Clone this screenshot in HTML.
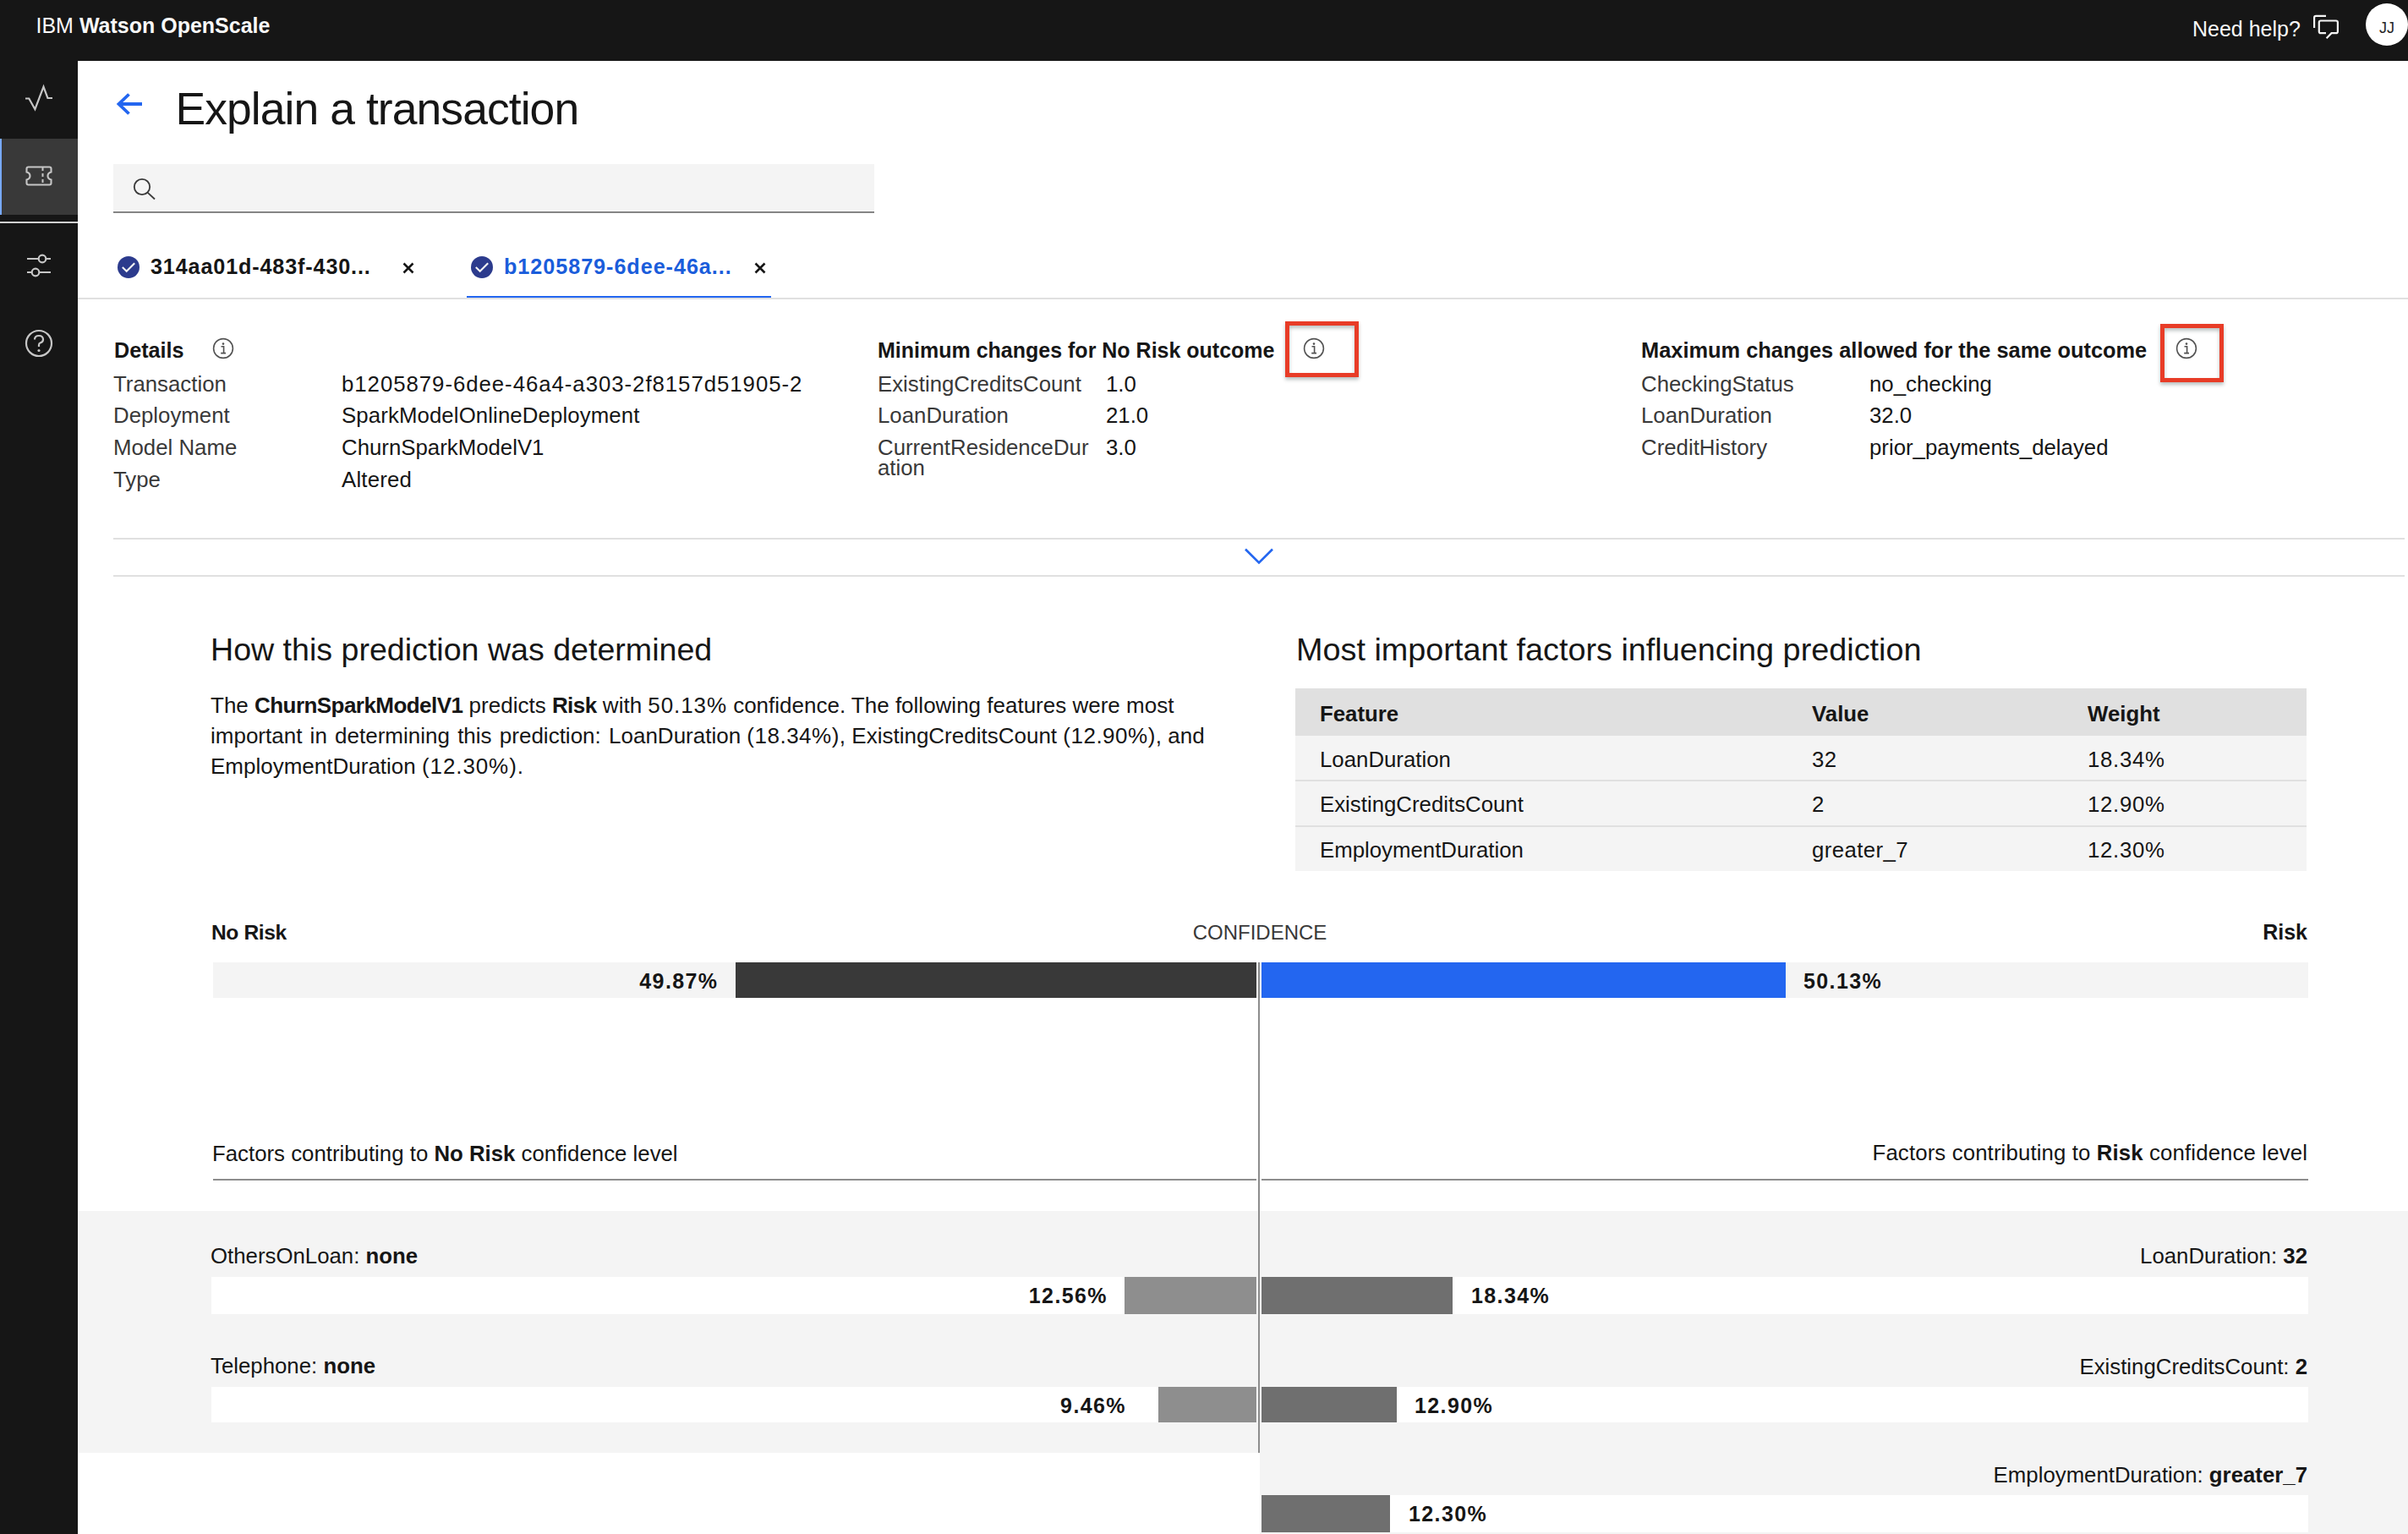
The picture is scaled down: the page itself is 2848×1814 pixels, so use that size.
<!DOCTYPE html>
<html><head><meta charset="utf-8"><title>Explain a transaction</title>
<style>
html,body{margin:0;padding:0;}
body{width:2848px;height:1814px;position:relative;overflow:hidden;background:#ffffff;font-family:"Liberation Sans",sans-serif;}
.t{position:absolute;white-space:nowrap;}
.t b{font-weight:700;}
.r{position:absolute;}
</style></head><body>
<div class="r" style="left:0px;top:0px;width:2848px;height:72px;background:#161616;"></div>
<div class="t" style="left:42.5px;top:17.5px;font-size:25px;line-height:25px;color:#f8f8f8;font-weight:400;">IBM <b>Watson OpenScale</b></div>
<div class="t" style="left:2593.0px;top:21.9px;font-size:25px;line-height:25px;color:#f8f8f8;font-weight:400;">Need help?</div>
<svg class="r" style="left:2734px;top:16px" width="34" height="32" viewBox="0 0 34 32">
<path d="M3.1 17 V5 Q3.1 2.9 5.1 2.9 H17" fill="none" stroke="#f4f4f4" stroke-width="2.2"/>
<path d="M17 23.2 H10.8 Q8.8 23.2 8.8 21.2 V10.5 Q8.8 8.5 10.8 8.5 H28.9 Q30.9 8.5 30.9 10.5 V21.2 Q30.9 23.2 28.9 23.2 H23.5 L17.6 29.2" fill="none" stroke="#f4f4f4" stroke-width="2.2"/>
</svg>
<div class="r" style="left:2798px;top:4px;width:50px;height:50px;border-radius:25px;background:#ffffff;"></div>
<div class="t" style="left:2814.0px;top:24.1px;font-size:18px;line-height:18px;color:#262626;font-weight:400;">JJ</div>
<div class="r" style="left:0px;top:72px;width:92px;height:1742px;background:#161616;"></div>
<div class="r" style="left:0px;top:164px;width:92px;height:90px;background:#393939;"></div>
<div class="r" style="left:0px;top:164px;width:2px;height:90px;background:#78a9ff;"></div>
<div class="r" style="left:0px;top:262px;width:92px;height:2px;background:#d0d0d0;"></div>
<svg class="r" style="left:28px;top:98px" width="36" height="36" viewBox="0 0 36 36">
<path d="M2 18.5 H6.3 L13.4 31.2 L23.5 4.6 L28.4 18 H34" fill="none" stroke="#c6c6c6" stroke-width="2.2" stroke-linejoin="miter" stroke-miterlimit="3"/>
</svg>
<svg class="r" style="left:28px;top:194px" width="36" height="28" viewBox="0 0 36 28">
<path d="M5.5 3.5 H30.5 Q32.5 3.5 32.5 5.5 V9.5 Q28.5 10.5 28.5 14 Q28.5 17.5 32.5 18.5 V22.5 Q32.5 24.5 30.5 24.5 H5.5 Q3.5 24.5 3.5 22.5 V18.5 Q7.5 17.5 7.5 14 Q7.5 10.5 3.5 9.5 V5.5 Q3.5 3.5 5.5 3.5 Z" fill="none" stroke="#c6c6c6" stroke-width="2.1"/>
<path d="M22.5 4 V25" stroke="#c6c6c6" stroke-width="2" stroke-dasharray="4 3"/>
</svg>
<svg class="r" style="left:30px;top:294px" width="32" height="36" viewBox="0 0 32 36">
<path d="M2 12 H15.5 M24.5 12 H30" stroke="#c6c6c6" stroke-width="2.2"/>
<circle cx="20" cy="12" r="4.3" fill="none" stroke="#c6c6c6" stroke-width="2.2"/>
<path d="M2 28 H7.5 M16.5 28 H30" stroke="#c6c6c6" stroke-width="2.2"/>
<circle cx="12" cy="28" r="4.3" fill="none" stroke="#c6c6c6" stroke-width="2.2"/>
</svg>
<svg class="r" style="left:28px;top:388px" width="36" height="36" viewBox="0 0 36 36">
<circle cx="18" cy="18" r="15" fill="none" stroke="#c6c6c6" stroke-width="2.2"/>
<path d="M13 13.5 Q13 9 18 9 Q23 9 23 13.5 Q23 16.5 19.5 17.5 Q18 18 18 20 V22" fill="none" stroke="#c6c6c6" stroke-width="2.2"/>
<circle cx="18" cy="26.5" r="1.6" fill="#c6c6c6"/>
</svg>
<svg class="r" style="left:136px;top:108px" width="34" height="30" viewBox="0 0 34 30">
<path d="M4 15 H32 M16.5 3.5 L4.5 15 L16.5 26.5" fill="none" stroke="#2366f0" stroke-width="3.8"/>
</svg>
<div class="t" style="left:207.5px;top:102.0px;font-size:53.5px;line-height:53.5px;color:#161616;font-weight:400;letter-spacing:-0.95px;">Explain a transaction</div>
<div class="r" style="left:134px;top:194px;width:900px;height:56px;background:#f4f4f4;"></div>
<div class="r" style="left:134px;top:250px;width:900px;height:2px;background:#858585;"></div>
<svg class="r" style="left:155px;top:208px" width="32" height="32" viewBox="0 0 32 32">
<circle cx="13" cy="13" r="9.2" fill="none" stroke="#393939" stroke-width="1.8"/>
<path d="M19.8 19.8 L28 27.5" stroke="#393939" stroke-width="1.8"/>
</svg>
<svg class="r" style="left:138px;top:302px" width="28" height="28" viewBox="0 0 28 28">
<circle cx="14" cy="14" r="13" fill="#2c3b8d"/>
<path d="M6.8 14 L11.7 18.8 L21.2 9.3" fill="none" stroke="#f4f4f4" stroke-width="2.1"/>
</svg>
<div class="t" style="left:178.0px;top:302.9px;font-size:25.2px;line-height:25.2px;color:#161616;font-weight:700;letter-spacing:0.85px;">314aa01d-483f-430...</div>
<svg class="r" style="left:476px;top:310px" width="14" height="14" viewBox="0 0 14 14">
<path d="M1.5 1.5 L12.5 12.5 M12.5 1.5 L1.5 12.5" stroke="#161616" stroke-width="2.6"/>
</svg>
<svg class="r" style="left:556px;top:302px" width="28" height="28" viewBox="0 0 28 28">
<circle cx="14" cy="14" r="13" fill="#2c3b8d"/>
<path d="M6.8 14 L11.7 18.8 L21.2 9.3" fill="none" stroke="#f4f4f4" stroke-width="2.1"/>
</svg>
<div class="t" style="left:596.0px;top:302.5px;font-size:25.2px;line-height:25.2px;color:#1a5ddb;font-weight:700;letter-spacing:0.95px;">b1205879-6dee-46a...</div>
<svg class="r" style="left:892px;top:310px" width="14" height="14" viewBox="0 0 14 14">
<path d="M1.5 1.5 L12.5 12.5 M12.5 1.5 L1.5 12.5" stroke="#161616" stroke-width="2.6"/>
</svg>
<div class="r" style="left:92px;top:352px;width:2756px;height:2px;background:#e0e0e0;"></div>
<div class="r" style="left:552px;top:350px;width:360px;height:2px;background:#2366f0;"></div>
<div class="t" style="left:135.0px;top:402.0px;font-size:25.2px;line-height:25.2px;color:#161616;font-weight:700;">Details</div>
<svg class="r" style="left:251px;top:399px" width="26" height="26" viewBox="0 0 26 26">
<circle cx="13" cy="13" r="11.4" fill="none" stroke="#525252" stroke-width="1.6"/>
<circle cx="13" cy="7.6" r="1.3" fill="#525252"/>
<path d="M10.5 10.8 H13.6 V18.6 M10.2 18.6 H16" fill="none" stroke="#525252" stroke-width="1.6"/>
</svg>
<div class="t" style="left:134.0px;top:441.7px;font-size:25.8px;line-height:25.8px;color:#393939;font-weight:400;">Transaction</div>
<div class="t" style="left:404.0px;top:441.7px;font-size:25.8px;line-height:25.8px;color:#161616;font-weight:400;letter-spacing:0.95px;">b1205879-6dee-46a4-a303-2f8157d51905-2</div>
<div class="t" style="left:134.0px;top:479.2px;font-size:25.8px;line-height:25.8px;color:#393939;font-weight:400;">Deployment</div>
<div class="t" style="left:404.0px;top:479.2px;font-size:25.8px;line-height:25.8px;color:#161616;font-weight:400;letter-spacing:0.1px;">SparkModelOnlineDeployment</div>
<div class="t" style="left:134.0px;top:517.0px;font-size:25.8px;line-height:25.8px;color:#393939;font-weight:400;">Model Name</div>
<div class="t" style="left:404.0px;top:517.0px;font-size:25.8px;line-height:25.8px;color:#161616;font-weight:400;letter-spacing:0px;">ChurnSparkModelV1</div>
<div class="t" style="left:134.0px;top:555.1px;font-size:25.8px;line-height:25.8px;color:#393939;font-weight:400;">Type</div>
<div class="t" style="left:404.0px;top:555.1px;font-size:25.8px;line-height:25.8px;color:#161616;font-weight:400;letter-spacing:0.2px;">Altered</div>
<div class="t" style="left:1038.0px;top:402.4px;font-size:25.0px;line-height:25.0px;color:#161616;font-weight:700;">Minimum changes for No Risk outcome</div>
<svg class="r" style="left:1541px;top:399px" width="26" height="26" viewBox="0 0 26 26">
<circle cx="13" cy="13" r="11.4" fill="none" stroke="#525252" stroke-width="1.6"/>
<circle cx="13" cy="7.6" r="1.3" fill="#525252"/>
<path d="M10.5 10.8 H13.6 V18.6 M10.2 18.6 H16" fill="none" stroke="#525252" stroke-width="1.6"/>
</svg>
<div class="t" style="left:1038.0px;top:441.7px;font-size:25.8px;line-height:25.8px;color:#393939;font-weight:400;">ExistingCreditsCount</div>
<div class="t" style="left:1308.0px;top:441.7px;font-size:25.8px;line-height:25.8px;color:#161616;font-weight:400;">1.0</div>
<div class="t" style="left:1038.0px;top:479.2px;font-size:25.8px;line-height:25.8px;color:#393939;font-weight:400;">LoanDuration</div>
<div class="t" style="left:1308.0px;top:479.2px;font-size:25.8px;line-height:25.8px;color:#161616;font-weight:400;">21.0</div>
<div class="t" style="left:1038.0px;top:517.0px;font-size:25.8px;line-height:25.8px;color:#393939;font-weight:400;">CurrentResidenceDur</div>
<div class="t" style="left:1308.0px;top:517.0px;font-size:25.8px;line-height:25.8px;color:#161616;font-weight:400;">3.0</div>
<div class="t" style="left:1038.0px;top:540.8px;font-size:25.8px;line-height:25.8px;color:#393939;font-weight:400;">ation</div>
<div class="t" style="left:1941.0px;top:401.8px;font-size:25.4px;line-height:25.4px;color:#161616;font-weight:700;">Maximum changes allowed for the same outcome</div>
<svg class="r" style="left:2573px;top:399px" width="26" height="26" viewBox="0 0 26 26">
<circle cx="13" cy="13" r="11.4" fill="none" stroke="#525252" stroke-width="1.6"/>
<circle cx="13" cy="7.6" r="1.3" fill="#525252"/>
<path d="M10.5 10.8 H13.6 V18.6 M10.2 18.6 H16" fill="none" stroke="#525252" stroke-width="1.6"/>
</svg>
<div class="t" style="left:1941.0px;top:441.7px;font-size:25.8px;line-height:25.8px;color:#393939;font-weight:400;">CheckingStatus</div>
<div class="t" style="left:2211.0px;top:441.7px;font-size:25.8px;line-height:25.8px;color:#161616;font-weight:400;">no_checking</div>
<div class="t" style="left:1941.0px;top:479.2px;font-size:25.8px;line-height:25.8px;color:#393939;font-weight:400;">LoanDuration</div>
<div class="t" style="left:2211.0px;top:479.2px;font-size:25.8px;line-height:25.8px;color:#161616;font-weight:400;">32.0</div>
<div class="t" style="left:1941.0px;top:517.0px;font-size:25.8px;line-height:25.8px;color:#393939;font-weight:400;">CreditHistory</div>
<div class="t" style="left:2211.0px;top:517.0px;font-size:25.8px;line-height:25.8px;color:#161616;font-weight:400;">prior_payments_delayed</div>
<div class="r" style="left:1520px;top:380px;width:87px;height:66px;box-sizing:border-box;border:5px solid #e83c27;box-shadow:0 3px 4px rgba(60,80,80,0.35), inset 0 3px 4px rgba(60,80,80,0.35);"></div>
<div class="r" style="left:2555px;top:383px;width:75px;height:69px;box-sizing:border-box;border:5px solid #e83c27;box-shadow:0 3px 4px rgba(60,80,80,0.35), inset 0 3px 4px rgba(60,80,80,0.35);"></div>
<div class="r" style="left:134px;top:636px;width:2710px;height:2px;background:#e0e0e0;"></div>
<div class="r" style="left:134px;top:680px;width:2710px;height:2px;background:#e0e0e0;"></div>
<svg class="r" style="left:1470px;top:645px" width="38" height="24" viewBox="0 0 38 24">
<path d="M3 4.5 L19 20.5 L35 4.5" fill="none" stroke="#2366f0" stroke-width="2.6"/>
</svg>
<div class="t" style="left:249.0px;top:749.7px;font-size:37.6px;line-height:37.6px;color:#161616;font-weight:400;">How this prediction was determined</div>
<div class="t" style="left:249.0px;top:821.3px;font-size:26px;line-height:26px;color:#161616;font-weight:400;">The <b style="letter-spacing:-0.55px">ChurnSparkModelV1</b> predicts <b style="letter-spacing:-0.55px">Risk</b> with <span style="letter-spacing:0.9px">50.13%</span> confidence. The following features were most</div>
<div class="t" style="left:249.0px;top:857.1px;font-size:26px;line-height:26px;color:#161616;font-weight:400;"><span style="word-spacing:2px">important in determining this prediction: </span>LoanDuration <span style="letter-spacing:0.5px">(18.34%)</span>, ExistingCreditsCount <span style="letter-spacing:0.5px">(12.90%)</span>, and</div>
<div class="t" style="left:249.0px;top:893.2px;font-size:26px;line-height:26px;color:#161616;font-weight:400;">EmploymentDuration <span style="letter-spacing:0.9px">(12.30%)</span>.</div>
<div class="t" style="left:1533.0px;top:749.9px;font-size:37.8px;line-height:37.8px;color:#161616;font-weight:400;">Most important factors influencing prediction</div>
<div class="r" style="left:1532px;top:814px;width:1196px;height:56px;background:#e0e0e0;"></div>
<div class="r" style="left:1532px;top:870px;width:1196px;height:160px;background:#f4f4f4;"></div>
<div class="r" style="left:1532px;top:922px;width:1196px;height:2px;background:#e0e0e0;"></div>
<div class="r" style="left:1532px;top:976px;width:1196px;height:2px;background:#e0e0e0;"></div>
<div class="t" style="left:1561.0px;top:831.5px;font-size:25.8px;line-height:25.8px;color:#161616;font-weight:700;">Feature</div>
<div class="t" style="left:2143.0px;top:831.5px;font-size:25.8px;line-height:25.8px;color:#161616;font-weight:700;">Value</div>
<div class="t" style="left:2469.0px;top:831.5px;font-size:25.8px;line-height:25.8px;color:#161616;font-weight:700;">Weight</div>
<div class="t" style="left:1561.0px;top:885.6px;font-size:25.8px;line-height:25.8px;color:#161616;font-weight:400;">LoanDuration</div>
<div class="t" style="left:2143.0px;top:885.6px;font-size:25.8px;line-height:25.8px;color:#161616;font-weight:400;letter-spacing:0.4px;">32</div>
<div class="t" style="left:2469.0px;top:885.6px;font-size:25.8px;line-height:25.8px;color:#161616;font-weight:400;letter-spacing:0.7px;">18.34%</div>
<div class="t" style="left:1561.0px;top:939.2px;font-size:25.8px;line-height:25.8px;color:#161616;font-weight:400;">ExistingCreditsCount</div>
<div class="t" style="left:2143.0px;top:939.2px;font-size:25.8px;line-height:25.8px;color:#161616;font-weight:400;letter-spacing:0.4px;">2</div>
<div class="t" style="left:2469.0px;top:939.2px;font-size:25.8px;line-height:25.8px;color:#161616;font-weight:400;letter-spacing:0.7px;">12.90%</div>
<div class="t" style="left:1561.0px;top:993.0px;font-size:25.8px;line-height:25.8px;color:#161616;font-weight:400;">EmploymentDuration</div>
<div class="t" style="left:2143.0px;top:993.0px;font-size:25.8px;line-height:25.8px;color:#161616;font-weight:400;letter-spacing:0.4px;">greater_7</div>
<div class="t" style="left:2469.0px;top:993.0px;font-size:25.8px;line-height:25.8px;color:#161616;font-weight:400;letter-spacing:0.7px;">12.30%</div>
<div class="t" style="left:250.0px;top:1090.5px;font-size:24.6px;line-height:24.6px;color:#161616;font-weight:700;letter-spacing:-0.4px;">No Risk</div>
<div class="t" style="left:1490.0px;transform:translateX(-50%);top:1091.0px;font-size:24px;line-height:24px;color:#393939;font-weight:400;">CONFIDENCE</div>
<div class="t" style="right:119.0px;top:1090.1px;font-size:25px;line-height:25px;color:#161616;font-weight:700;">Risk</div>
<div class="r" style="left:252px;top:1138px;width:2478px;height:42px;background:#f4f4f4;"></div>
<div class="r" style="left:870px;top:1138px;width:616px;height:42px;background:#393939;"></div>
<div class="r" style="left:1492px;top:1138px;width:620px;height:42px;background:#2366f0;"></div>
<div class="t" style="right:1998.5px;top:1148.1px;font-size:25px;line-height:25px;color:#161616;font-weight:700;letter-spacing:1.4px;">49.87%</div>
<div class="t" style="left:2133.0px;top:1148.1px;font-size:25px;line-height:25px;color:#161616;font-weight:700;letter-spacing:1.4px;">50.13%</div>
<div class="t" style="left:251.0px;top:1351.9px;font-size:25.8px;line-height:25.8px;color:#161616;font-weight:400;">Factors contributing to <b>No Risk</b> confidence level</div>
<div class="t" style="right:119.0px;top:1351.4px;font-size:25.8px;line-height:25.8px;color:#161616;font-weight:400;letter-spacing:0.12px;">Factors contributing to <b>Risk</b> confidence level</div>
<div class="r" style="left:252px;top:1394px;width:1234px;height:2px;background:#8d8d8d;"></div>
<div class="r" style="left:1492px;top:1394px;width:1238px;height:2px;background:#8d8d8d;"></div>
<div class="r" style="left:92px;top:1432px;width:2756px;height:286px;background:#f4f4f4;"></div>
<div class="r" style="left:1490px;top:1718px;width:1358px;height:96px;background:#f4f4f4;"></div>
<div class="t" style="left:249.0px;top:1473.2px;font-size:25.8px;line-height:25.8px;color:#161616;font-weight:400;">OthersOnLoan: <b>none</b></div>
<div class="t" style="right:119.0px;top:1473.4px;font-size:25.8px;line-height:25.8px;color:#161616;font-weight:400;">LoanDuration: <b>32</b></div>
<div class="r" style="left:250px;top:1510px;width:2480px;height:44px;background:#ffffff;"></div>
<div class="r" style="left:1330px;top:1510px;width:156px;height:44px;background:#8e8e8e;"></div>
<div class="r" style="left:1492px;top:1510px;width:226px;height:44px;background:#6f6f6f;"></div>
<div class="t" style="right:1538.0px;top:1519.9px;font-size:25px;line-height:25px;color:#161616;font-weight:700;letter-spacing:1.4px;">12.56%</div>
<div class="t" style="left:1740.0px;top:1519.9px;font-size:25px;line-height:25px;color:#161616;font-weight:700;letter-spacing:1.4px;">18.34%</div>
<div class="t" style="left:249.0px;top:1603.4px;font-size:25.8px;line-height:25.8px;color:#161616;font-weight:400;">Telephone: <b>none</b></div>
<div class="t" style="right:119.0px;top:1603.8px;font-size:25.8px;line-height:25.8px;color:#161616;font-weight:400;">ExistingCreditsCount: <b>2</b></div>
<div class="r" style="left:250px;top:1640px;width:2480px;height:42px;background:#ffffff;"></div>
<div class="r" style="left:1370px;top:1640px;width:116px;height:42px;background:#8e8e8e;"></div>
<div class="r" style="left:1492px;top:1640px;width:160px;height:42px;background:#6f6f6f;"></div>
<div class="t" style="right:1516.0px;top:1649.9px;font-size:25px;line-height:25px;color:#161616;font-weight:700;letter-spacing:1.4px;">9.46%</div>
<div class="t" style="left:1673.0px;top:1649.9px;font-size:25px;line-height:25px;color:#161616;font-weight:700;letter-spacing:1.4px;">12.90%</div>
<div class="t" style="right:119.0px;top:1731.6px;font-size:25.8px;line-height:25.8px;color:#161616;font-weight:400;">EmploymentDuration: <b>greater_7</b></div>
<div class="r" style="left:1490px;top:1768px;width:1240px;height:44px;background:#ffffff;"></div>
<div class="r" style="left:1492px;top:1768px;width:152px;height:44px;background:#6f6f6f;"></div>
<div class="t" style="left:1666.0px;top:1778.1px;font-size:25px;line-height:25px;color:#161616;font-weight:700;letter-spacing:1.4px;">12.30%</div>
<div class="r" style="left:1488px;top:1138px;width:2px;height:580px;background:#8d8d8d;"></div>
</body></html>
